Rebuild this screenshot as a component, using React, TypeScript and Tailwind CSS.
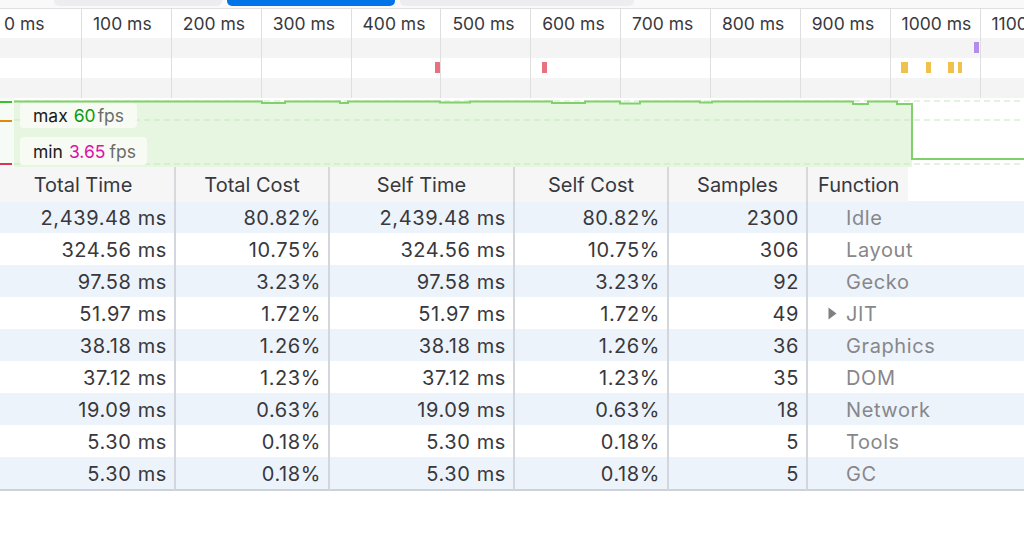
import React from 'react'

const ticks = ['0 ms', '100 ms', '200 ms', '300 ms', '400 ms', '500 ms', '600 ms', '700 ms', '800 ms', '900 ms', '1000 ms', '1100 ms']

const markers = [
  { track: 0, x: 974, w: 5, color: 'bg-[#b28ee8]' },
  { track: 1, x: 435, w: 5, color: 'bg-[#e7717f]' },
  { track: 1, x: 542, w: 5, color: 'bg-[#e7717f]' },
  { track: 1, x: 901, w: 7, color: 'bg-[#f0c14d]' },
  { track: 1, x: 926, w: 5, color: 'bg-[#f0c14d]' },
  { track: 1, x: 948, w: 6, color: 'bg-[#f0c14d]' },
  { track: 1, x: 958, w: 4, color: 'bg-[#f0c14d]' },
]

const rows = [
  ['2,439.48 ms', '80.82%', '2,439.48 ms', '80.82%', '2300', 'Idle', false],
  ['324.56 ms', '10.75%', '324.56 ms', '10.75%', '306', 'Layout', false],
  ['97.58 ms', '3.23%', '97.58 ms', '3.23%', '92', 'Gecko', false],
  ['51.97 ms', '1.72%', '51.97 ms', '1.72%', '49', 'JIT', true],
  ['38.18 ms', '1.26%', '38.18 ms', '1.26%', '36', 'Graphics', false],
  ['37.12 ms', '1.23%', '37.12 ms', '1.23%', '35', 'DOM', false],
  ['19.09 ms', '0.63%', '19.09 ms', '0.63%', '18', 'Network', false],
  ['5.30 ms', '0.18%', '5.30 ms', '0.18%', '5', 'Tools', false],
  ['5.30 ms', '0.18%', '5.30 ms', '0.18%', '5', 'GC', false],
] as const

const cols = 'grid grid-cols-[176px_154px_185px_154px_139px_1fr]'

// top edge of the fps graph, y in px from the top of the 69px area
const fpsLine =
  'M14,3.5 L262,3.5 L262,5 L285,5 L285,3.5 L340,3.5 L340,5 L348,5 L348,3.5 L440,3.5 L440,4.5 L470,4.5 L470,3.5 L552,3.5 L552,5 L585,5 L585,3.5 L620,3.5 L620,5.5 L640,5.5 L640,3.5 L700,3.5 L700,4.5 L712,4.5 L712,3.5 L853,3.5 L853,6 L868,6 L868,3.5 L897,3.5 L897,6 L912,6'

function FpsGraph() {
  return (
    <svg className="absolute inset-0" width="1024" height="69" viewBox="0 0 1024 69">
      <rect x="0" y="0" width="14" height="69" fill="#f7fbf5" />
      <path d={fpsLine + ' L912,69 L14,69 Z'} fill="#e6f6e1" />
      <line x1="14" y1="3" x2="1024" y2="3" stroke="#c6e9bd" strokeWidth="1.2" strokeDasharray="6 4" />
      <line x1="14" y1="22" x2="1024" y2="22" stroke="#c6e9bd" strokeWidth="1.2" strokeDasharray="6 4" />
      <line x1="14" y1="66" x2="1024" y2="66" stroke="#c6e9bd" strokeWidth="1.2" strokeDasharray="6 4" />
      <path d={fpsLine + ' L912,61 L1024,61'} fill="none" stroke="#80d06b" strokeWidth="2" />
      <line x1="0" y1="4" x2="12" y2="4" stroke="#3cbf2f" strokeWidth="2" />
      <line x1="0" y1="23" x2="12" y2="23" stroke="#df8a0b" strokeWidth="2" />
      <line x1="0" y1="66" x2="12" y2="66" stroke="#e0305a" strokeWidth="2" />
    </svg>
  )
}

export default function App() {
  return (
    <div className="w-[1024px] h-[552px] overflow-hidden bg-white font-['Inter',sans-serif] text-[#38383d]">
      {/* tab strip */}
      <div className="h-[9px] bg-[#f9f9fa] border-b border-[#e0e0e2] relative">
        <div className="absolute left-[54px] top-0 w-[168px] h-[6px] rounded-b-[5px] bg-[#ededf0]" />
        <div className="absolute left-[227px] top-0 w-[168px] h-[6px] rounded-b-[5px] bg-[#0074e8]" />
        <div className="absolute left-[400px] top-0 w-[234px] h-[6px] rounded-b-[5px] bg-[#ededf0]" />
      </div>

      {/* ruler + tracks */}
      <div className="relative h-[89px]">
        <div className="flex h-[29px]">
          {ticks.map((t, i) => (
            <div
              key={t}
              className={`shrink-0 h-full pt-[1px] text-[17.5px] leading-[28px] whitespace-nowrap ${
                i === 0 ? 'w-[82px] pl-[4px]' : 'w-[89.85px] pl-[11px]'
              }`}
            >
              {t}
            </div>
          ))}
        </div>
        <div className="h-[20px] bg-[#f4f4f4]" />
        <div className="h-[20px] bg-white" />
        <div className="h-[20px] bg-[#f4f4f4]" />
        {ticks.slice(1).map((t, i) => (
          <div
            key={t}
            className="absolute top-0 bottom-0 w-px bg-[#dedede]"
            style={{ left: 81 + i * 89.85 }}
          />
        ))}
        {markers.map((m, i) => (
          <div
            key={i}
            className={`absolute h-[11px] ${m.color}`}
            style={{ left: m.x, width: m.w, top: 33 + m.track * 20 }}
          />
        ))}
      </div>

      {/* fps graph */}
      <div className="relative h-[69px]">
        <FpsGraph />
        <div className="absolute left-[20px] top-[5px] h-[25px] w-[117px] rounded-[4px] bg-[#f8fcf6]/90 pl-[13px] text-[17.5px] leading-[25px] flex items-center">
          <span className="text-[#1a1a1a]">max</span>
          <span className="ml-[6px] text-[#0a9a0a]">60</span>
          <span className="ml-[2px] text-[#6b6b6b]">fps</span>
        </div>
        <div className="absolute left-[20px] top-[39px] h-[28px] w-[127px] rounded-[4px] bg-[#f8fcf6]/90 pl-[13px] pt-[2px] text-[17.5px] leading-[26px] flex items-center">
          <span className="text-[#1a1a1a]">min</span>
          <span className="ml-[6px] text-[#e010a8]">3.65</span>
          <span className="ml-[4px] text-[#6b6b6b]">fps</span>
        </div>
      </div>

      {/* call tree table */}
      <div className={`${cols} h-[34px] text-[20px] leading-[34px]`}>
        {['Total Time', 'Total Cost', 'Self Time', 'Self Cost', 'Samples'].map((h, i) => (
          <div
            key={h}
            className={`bg-[#f6f6f7] border-r-2 border-[#d9d9dd] text-center pt-[1px] ${i === 0 ? 'pr-[8px]' : ''}`}
          >
            {h}
          </div>
        ))}
        <div>
          <div className="w-[100px] h-full bg-[#f6f6f7] pl-[10px] pt-[1px]">Function</div>
        </div>
      </div>

      <div className="border-b-2 border-[#cdd2d9]">
        {rows.map((r, i) => (
          <div
            key={i}
            className={`${cols} h-[32px] text-[20px] tracking-[0.6px] leading-[32px] ${
              i % 2 === 0 ? 'bg-[#edf3fa]' : 'bg-white'
            }`}
          >
            {r.slice(0, 5).map((c, j) => (
              <div key={j} className="border-r-2 border-[#d3d7dd] text-right pr-[7px] whitespace-nowrap pt-[1px]">
                {c as string}
              </div>
            ))}
            <div className="relative pl-[38px] pt-[1px] text-[#87878b] whitespace-nowrap">
              {r[6] && (
                <svg className="absolute left-[20px] top-[10px]" width="9" height="13" viewBox="0 0 9 13">
                  <path d="M0.5,0.5 L8.5,6.5 L0.5,12.5 Z" fill="#808084" />
                </svg>
              )}
              {r[5]}
            </div>
          </div>
        ))}
      </div>
    </div>
  )
}
